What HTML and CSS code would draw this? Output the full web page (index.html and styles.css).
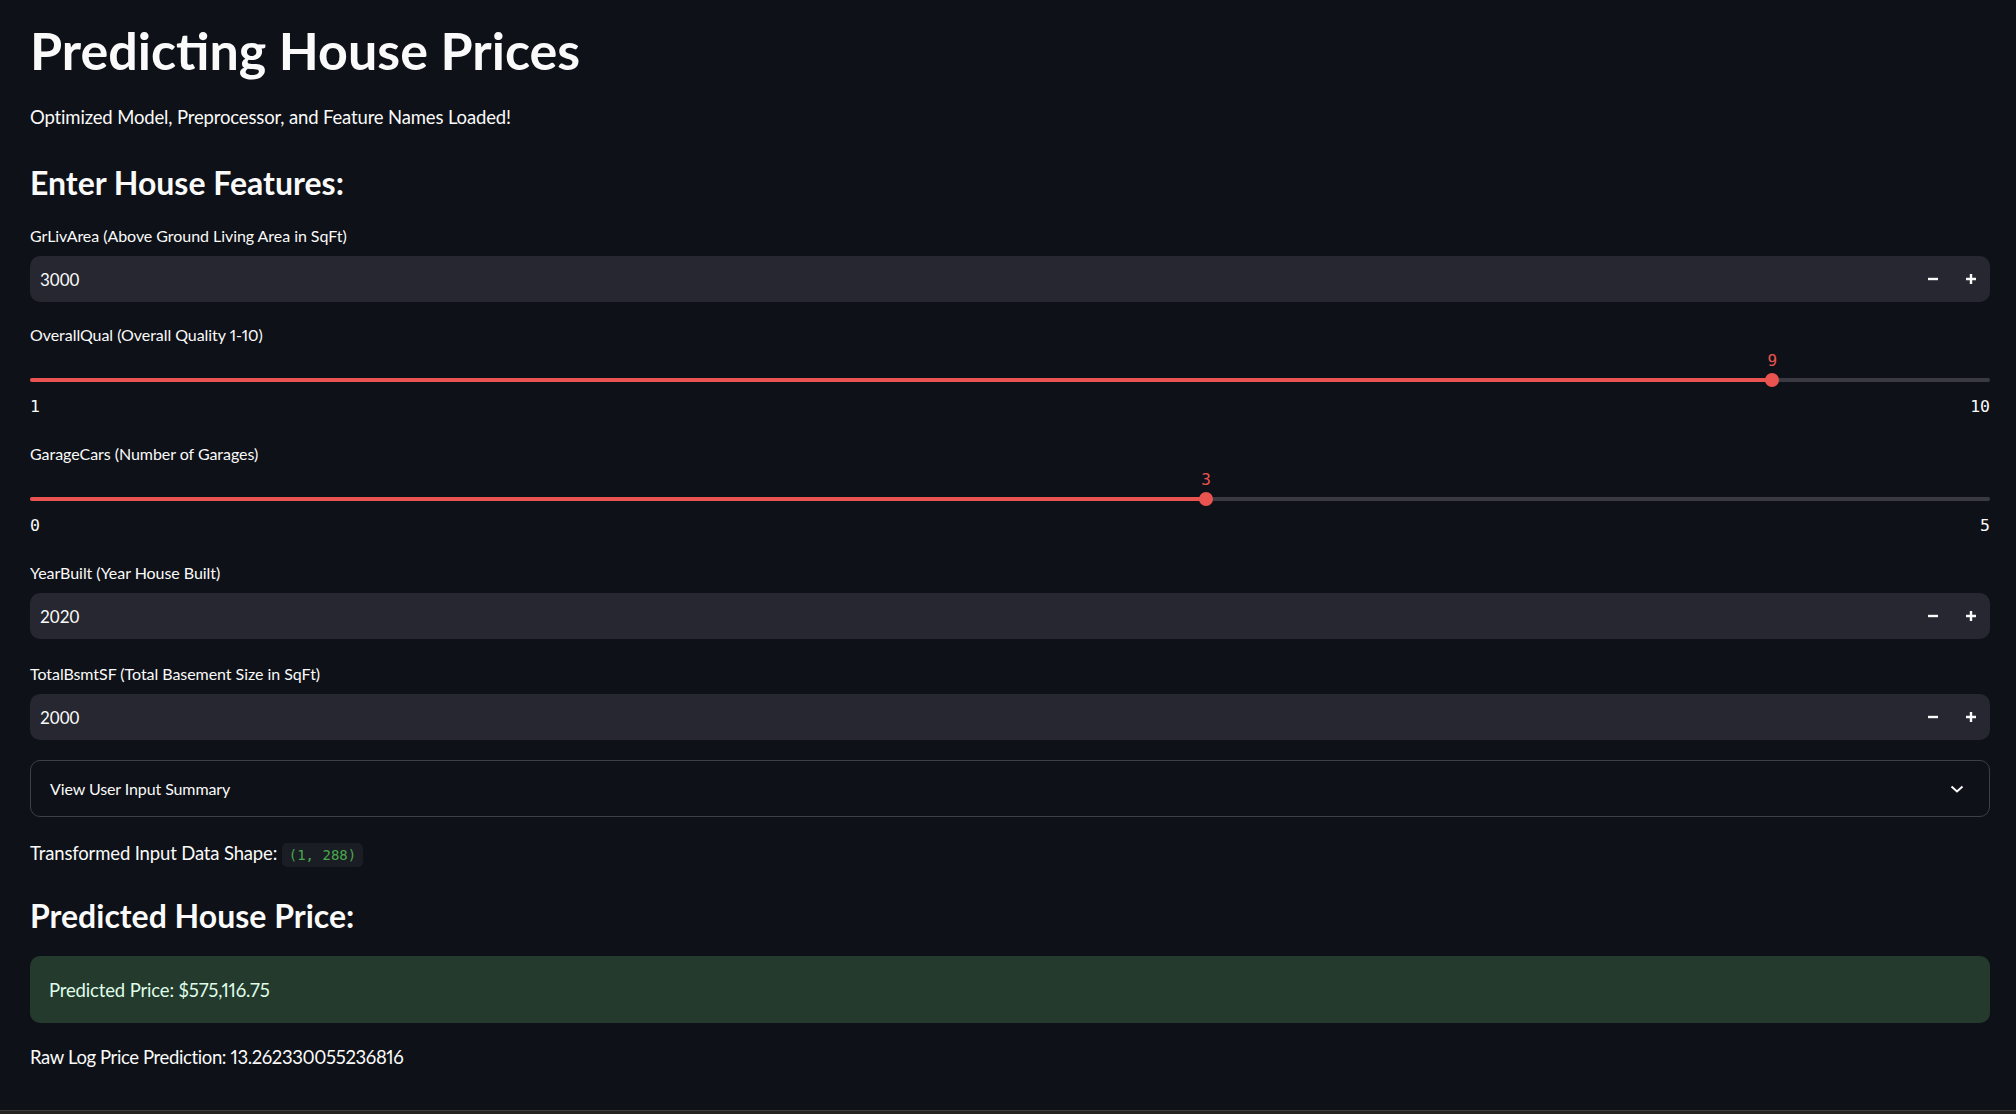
FILE: index.html
```html
<!DOCTYPE html>
<html lang="en">
<head>
<meta charset="utf-8">
<title>Predicting House Prices</title>
<link rel="stylesheet" href="styles.css">
</head>
<body>
<div class="app">
  <main class="main">
    <h1 class="title">Predicting House Prices</h1>
    <p class="text subtitle">Optimized Model, Preprocessor, and Feature Names Loaded!</p>
    <h2 class="heading heading-features">Enter House Features:</h2>

    <div class="form">
      <div class="widget">
        <label class="label">GrLivArea (Above Ground Living Area in SqFt)</label>
        <div class="number-input">
          <span class="number-value">3000</span>
          <div class="steps">
            <button class="step" aria-label="decrement"><svg width="12" height="12" viewBox="0 0 12 12"><path d="M1 6h10" stroke="#fafafa" stroke-width="2.4"/></svg></button>
            <button class="step" aria-label="increment"><svg width="12" height="12" viewBox="0 0 12 12"><path d="M1 6h10M6 1v10" stroke="#fafafa" stroke-width="2.4"/></svg></button>
          </div>
        </div>
      </div>

      <div class="widget">
        <label class="label">OverallQual (Overall Quality 1-10)</label>
        <div class="slider">
          <div class="rail">
            <div class="fill" style="width:88.889%"></div>
            <div class="thumb" style="left:88.889%"><span class="thumb-value">9</span></div>
          </div>
          <div class="ticks"><span>1</span><span>10</span></div>
        </div>
      </div>

      <div class="widget">
        <label class="label">GarageCars (Number of Garages)</label>
        <div class="slider">
          <div class="rail">
            <div class="fill" style="width:60%"></div>
            <div class="thumb" style="left:60%"><span class="thumb-value">3</span></div>
          </div>
          <div class="ticks"><span>0</span><span>5</span></div>
        </div>
      </div>

      <div class="widget">
        <label class="label">YearBuilt (Year House Built)</label>
        <div class="number-input">
          <span class="number-value">2020</span>
          <div class="steps">
            <button class="step" aria-label="decrement"><svg width="12" height="12" viewBox="0 0 12 12"><path d="M1 6h10" stroke="#fafafa" stroke-width="2.4"/></svg></button>
            <button class="step" aria-label="increment"><svg width="12" height="12" viewBox="0 0 12 12"><path d="M1 6h10M6 1v10" stroke="#fafafa" stroke-width="2.4"/></svg></button>
          </div>
        </div>
      </div>

      <div class="widget widget-last">
        <label class="label">TotalBsmtSF (Total Basement Size in SqFt)</label>
        <div class="number-input">
          <span class="number-value">2000</span>
          <div class="steps">
            <button class="step" aria-label="decrement"><svg width="12" height="12" viewBox="0 0 12 12"><path d="M1 6h10" stroke="#fafafa" stroke-width="2.4"/></svg></button>
            <button class="step" aria-label="increment"><svg width="12" height="12" viewBox="0 0 12 12"><path d="M1 6h10M6 1v10" stroke="#fafafa" stroke-width="2.4"/></svg></button>
          </div>
        </div>
      </div>

      <div class="expander">
        <span class="expander-title">View User Input Summary</span>
        <svg class="chevron" width="14" height="10" viewBox="0 0 14 10"><path d="M1.5 2.5l5.5 5 5.5-5" fill="none" stroke="#fafafa" stroke-width="2"/></svg>
      </div>
    </div>

    <p class="text shape">Transformed Input Data Shape: <code class="code">(1, 288)</code></p>

    <h2 class="heading heading-price">Predicted House Price:</h2>
    <div class="success">Predicted Price: $575,116.75</div>
    <p class="text raw">Raw Log Price Prediction: 13.262330055236816</p>
  </main>
  <div class="bottom-strip"></div>
</div>
</body>
</html>
```

FILE: styles.css
```css
* { box-sizing: border-box; }

html, body {
  margin: 0;
  padding: 0;
  background: #0e1117;
}

body {
  color: #fafafa;
  font-family: Lato, "Noto Sans", sans-serif;
  font-variant-numeric: proportional-nums;
  min-height: 1114px;
}

.app {
  min-height: 1114px;
}

.main {
  display: flex;
  flex-direction: column;
  padding: 0 26px 0 30px;
}

.title {
  margin: 18px 0 0;
  font-size: 52px;
  line-height: 64px;
  font-weight: 700;
}

.text {
  margin: 0;
  font-size: 18.5px;
  line-height: 28px;
  letter-spacing: -0.15px;
}

.subtitle { margin-top: 21px; }

.heading {
  margin: 0;
  font-size: 32px;
  line-height: 40px;
  font-weight: 700;
}

.heading-features { margin-top: 31.5px; }
.heading-price { margin-top: 29.5px; }

.form {
  display: flex;
  flex-direction: column;
  gap: 21px;
  margin-top: 21.5px;
}

.widget {
  display: flex;
  flex-direction: column;
}

.widget-last { margin-top: 2px; }

.label {
  font-size: 16px;
  line-height: 24px;
  letter-spacing: -0.05px;
}

.number-input {
  margin-top: 8px;
  height: 46px;
  background: #262730;
  border-radius: 10px;
  display: flex;
  align-items: center;
  justify-content: space-between;
  padding-left: 10px;
}

.number-value {
  font-size: 17px;
  font-variant-numeric: tabular-nums;
}

.steps {
  display: flex;
  height: 100%;
}

.step {
  width: 38px;
  height: 100%;
  background: transparent;
  border: 0;
  padding: 0;
  display: flex;
  align-items: center;
  justify-content: center;
}

.slider {
  height: 74px;
  padding-top: 31px;
}

.rail {
  position: relative;
  height: 4px;
  background: #3a3b42;
  border-radius: 2px;
}

.fill {
  height: 100%;
  background: #ea5450;
  border-radius: 2px;
}

.thumb {
  position: absolute;
  top: 50%;
  width: 14px;
  height: 14px;
  margin: -7px 0 0 -7px;
  border-radius: 50%;
  background: #ea5450;
}

.thumb-value {
  position: absolute;
  top: -22px;
  left: 50%;
  transform: translateX(-50%);
  font-family: "DejaVu Sans Mono", "Liberation Mono", monospace;
  font-size: 16px;
  line-height: 20px;
  color: #ea5450;
}

.ticks {
  display: flex;
  justify-content: space-between;
  margin-top: 15px;
  font-family: "DejaVu Sans Mono", "Liberation Mono", monospace;
  font-size: 16.5px;
  line-height: 20px;
}

.expander {
  margin-top: -1px;
  height: 57px;
  border: 1px solid #3d3f46;
  border-radius: 10px;
  display: flex;
  align-items: center;
  justify-content: space-between;
  padding: 0 25px 0 19px;
}

.expander-title {
  font-size: 16px;
  letter-spacing: -0.1px;
}

.shape { margin-top: 21.5px; }

.code {
  display: inline-block;
  height: 24px;
  line-height: 24px;
  padding: 0 7px;
  border-radius: 5px;
  background: #1b1d24;
  color: #48a84c;
  font-family: "DejaVu Sans Mono", "Liberation Mono", monospace;
  font-size: 14px;
  letter-spacing: 0;
  vertical-align: middle;
}

.success {
  margin-top: 20px;
  height: 67px;
  padding: 0 19px;
  display: flex;
  align-items: center;
  background: #243a2d;
  border-radius: 10px;
  color: #dffde9;
  font-size: 18.5px;
  letter-spacing: -0.15px;
}

.raw {
  margin-top: 20px;
  letter-spacing: -0.38px;
}

.bottom-strip {
  position: fixed;
  left: 0;
  right: 0;
  bottom: 0;
  height: 4px;
  background: #24231f;
  border-top: 1px solid #3d3d3d;
}
```
